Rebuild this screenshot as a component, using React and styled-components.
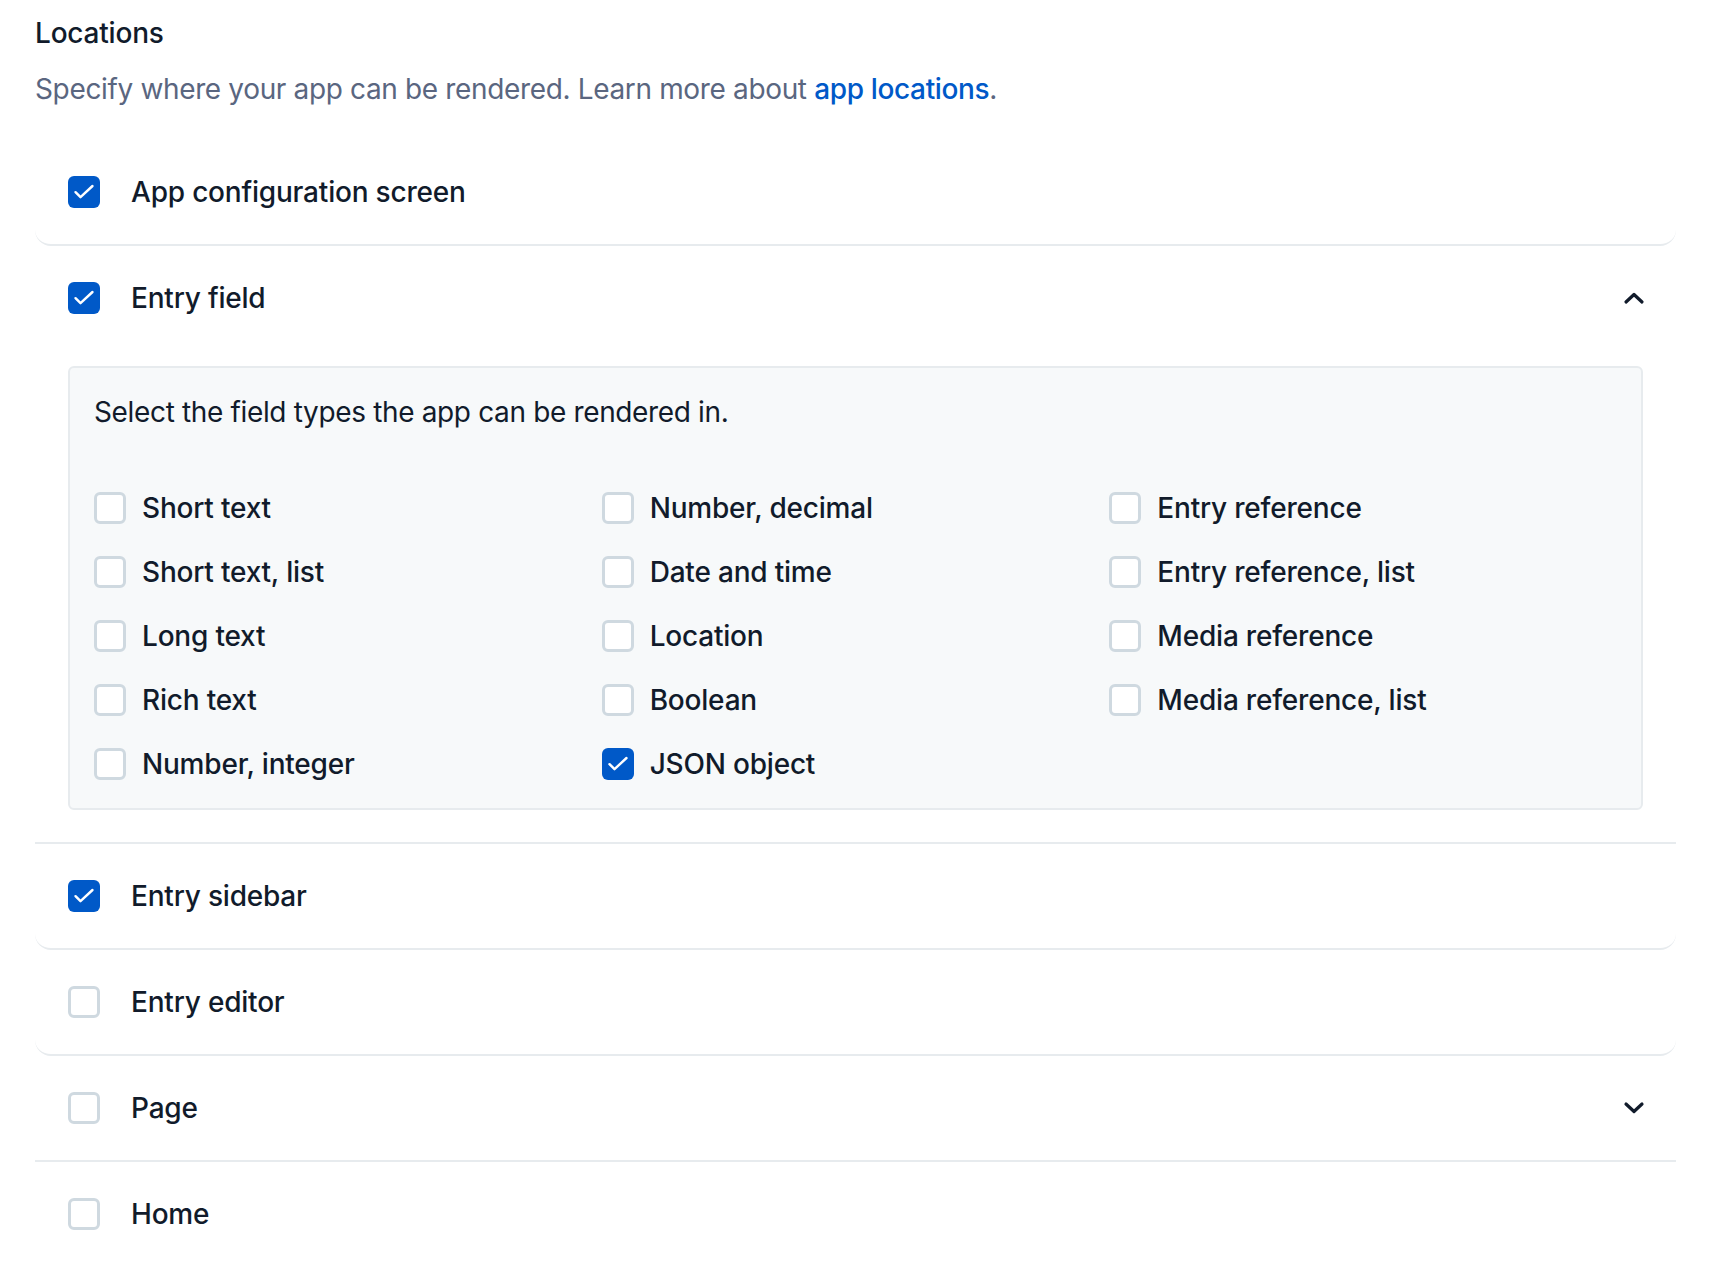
import React from 'react';
import styled, { createGlobalStyle } from 'styled-components';

const GlobalStyle = createGlobalStyle`
  body {
    margin: 0;
    background: #ffffff;
    font-family: Inter, 'Noto Sans', sans-serif;
    color: #111b2b;
  }
`;

const Page = styled.div`
  padding: 13px 48px 0 35px;
`;

const Title = styled.div`
  font-size: 28px;
  line-height: 40px;
  font-weight: 500;
  letter-spacing: -0.2px;
  color: #111b2b;
`;

const Description = styled.p`
  margin: 16px 0 0;
  font-size: 28px;
  line-height: 40px;
  letter-spacing: -0.35px;
  color: #5a6680;
`;

const Link = styled.a`
  color: #0059c8;
  font-weight: 500;
  text-decoration: none;
`;

const List = styled.div`
  margin-top: 31px;
`;

const Item = styled.div`
  border-bottom: 2px solid #e7ebee;
  border-radius: ${p => (p.$rounded ? '0 0 16px 16px' : '0')};

  &:last-child {
    border-bottom-color: transparent;
  }
`;

const ItemHeader = styled.div`
  display: flex;
  align-items: center;
  gap: 31px;
  padding: 32px 33px;
`;

const ItemLabel = styled.span`
  flex: 1;
  font-size: 28px;
  line-height: 40px;
  font-weight: 500;
  letter-spacing: -0.2px;
  color: #111b2b;
`;

const Box = styled.span`
  flex: none;
  box-sizing: border-box;
  width: 32px;
  height: 32px;
  border-radius: 6px;
  display: flex;
  align-items: center;
  justify-content: center;
  background: ${p => (p.$checked ? '#0059c8' : '#ffffff')};
  border: ${p => (p.$checked ? 'none' : '3px solid #cfd9e0')};
`;

const Chevron = styled.svg`
  width: 22px;
  height: 14px;
  margin-right: -2px;
`;

const Panel = styled.div`
  margin: 16px 33px 32px;
  background: #f7f9fa;
  border: 2px solid #e7ebee;
  border-radius: 6px;
  padding: 24px;
`;

const PanelText = styled.div`
  font-size: 28px;
  line-height: 40px;
  letter-spacing: -0.35px;
  color: #111b2b;
`;

const FieldGrid = styled.div`
  margin-top: 56px;
  display: grid;
  grid-template-columns: repeat(3, 1fr);
  grid-auto-flow: column;
  grid-template-rows: repeat(5, 40px);
  row-gap: 24px;
`;

const Field = styled.label`
  display: flex;
  align-items: center;
  gap: 16px;
  font-size: 28px;
  line-height: 40px;
  font-weight: 500;
  letter-spacing: -0.2px;
  color: #111b2b;
`;

function Checkbox({ checked }) {
  return (
    <Box $checked={checked}>
      {checked && (
        <svg width="32" height="32" viewBox="0 0 32 32">
          <path d="M7.5 16.2 L12.5 21.2 L24.5 10" fill="none" stroke="#fff" strokeWidth="2.4" strokeLinecap="round" strokeLinejoin="round" />
        </svg>
      )}
    </Box>
  );
}

function ChevronIcon({ up }) {
  return (
    <Chevron viewBox="0 0 22 14">
      <path d={up ? 'M3 11 L11 3.5 L19 11' : 'M3 3 L11 10.5 L19 3'} fill="none" stroke="#111b2b" strokeWidth="3.2" strokeLinecap="round" strokeLinejoin="round" />
    </Chevron>
  );
}

const fieldTypes = [
  ['Short text', false],
  ['Short text, list', false],
  ['Long text', false],
  ['Rich text', false],
  ['Number, integer', false],
  ['Number, decimal', false],
  ['Date and time', false],
  ['Location', false],
  ['Boolean', false],
  ['JSON object', true],
  ['Entry reference', false],
  ['Entry reference, list', false],
  ['Media reference', false],
  ['Media reference, list', false],
];

const locations = [
  { label: 'App configuration screen', checked: true },
  { label: 'Entry field', checked: true, accordion: 'up', fields: true },
  { label: 'Entry sidebar', checked: true },
  { label: 'Entry editor', checked: false },
  { label: 'Page', checked: false, accordion: 'down' },
  { label: 'Home', checked: false, accordion: 'none' },
];

export default function App() {
  return (
    <Page>
      <GlobalStyle />
      <Title>Locations</Title>
      <Description>
        Specify where your app can be rendered. Learn more about <Link href="#">app locations</Link>.
      </Description>
      <List>
        {locations.map(loc => (
          <Item key={loc.label} $rounded={!loc.accordion}>
            <ItemHeader>
              <Checkbox checked={loc.checked} />
              <ItemLabel>{loc.label}</ItemLabel>
              {loc.accordion === 'up' && <ChevronIcon up />}
              {loc.accordion === 'down' && <ChevronIcon />}
            </ItemHeader>
            {loc.fields && (
              <Panel>
                <PanelText>Select the field types the app can be rendered in.</PanelText>
                <FieldGrid>
                  {fieldTypes.map(([name, checked]) => (
                    <Field key={name}>
                      <Checkbox checked={checked} />
                      {name}
                    </Field>
                  ))}
                </FieldGrid>
              </Panel>
            )}
          </Item>
        ))}
      </List>
    </Page>
  );
}
